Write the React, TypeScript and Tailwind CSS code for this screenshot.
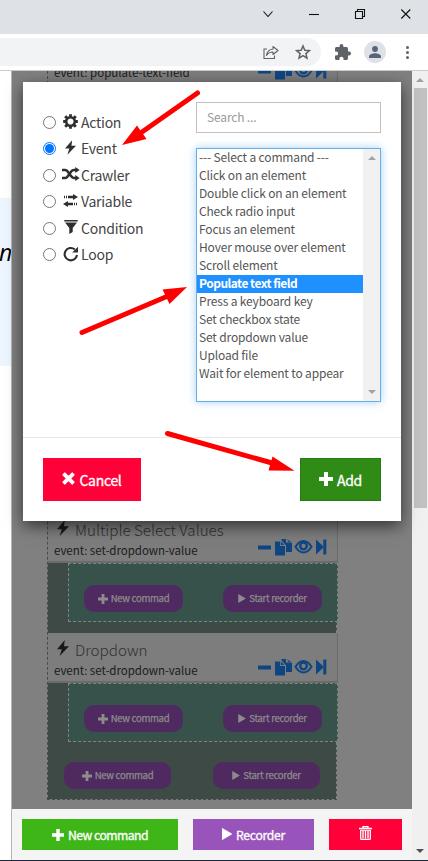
import React from "react";

const sans = "font-['Noto_Sans_CJK_SC','Noto_Sans',sans-serif]";

function Plus({ className = "" }: { className?: string }) {
  return (
    <svg viewBox="0 0 14 14" className={className} fill="currentColor">
      <path d="M5 0h4v5h5v4H9v5H5V9H0V5h5z" />
    </svg>
  );
}

function Play({ className = "" }: { className?: string }) {
  return (
    <svg viewBox="0 0 10 12" className={className} fill="currentColor">
      <path d="M0 0.3Q0-.2.6.2L9.7 5.6q.5.4 0 .8L.6 11.8Q0 12.2 0 11.7z" />
    </svg>
  );
}

function Bolt({ className = "" }: { className?: string }) {
  return (
    <svg viewBox="0 0 12 16" className={className} fill="currentColor">
      <path d="M7.800 0 0 9.200h4.800L2.600 16 12 6.200H7z" />
    </svg>
  );
}

function Gear() {
  return (
    <svg viewBox="-8 -8 16 16" className="h-[15px] w-[15px]" fill="none" stroke="currentColor">
      <circle r="4.600" strokeWidth="2.700" />
      <path
        d="M0-5V-7.800M0 5V7.800M-5 0H-7.800M5 0H7.800M-3.700-3.700-5.700-5.700M3.700-3.700 5.700-5.700M-3.700 3.700-5.700 5.700M3.700 3.700 5.700 5.700"
        strokeWidth="3"
      />
    </svg>
  );
}

function Shuffle() {
  return (
    <svg viewBox="0 0 18 14" className="h-[14px] w-[18px] shrink-0" fill="none" stroke="currentColor" strokeWidth="2.500">
      <path d="M0 2.900h3.200c1.300 0 1.800.7 2.400 1.500l3.600 4.900c.7 1 1.300 1.600 2.600 1.600H14M0 10.900h3.200c1.300 0 1.800-.7 2.400-1.500l3.600-4.900c.7-1 1.300-1.600 2.600-1.600H14" />
      <path d="M13.300 0 17.600 3l-4.300 3zM13.300 8l4.300 3-4.300 3z" fill="currentColor" stroke="none" />
    </svg>
  );
}

function Transfer() {
  return (
    <svg viewBox="0 0 15 13" className="h-[13px] w-[15px]" fill="currentColor">
      <path d="M10 0l5 3-5 3V4.200H5V1.800h5zM1 1.800h1v2.400H1zM3 1.800h1v2.400H3zM5 7l-5 3 5 3v-1.800h5V8.800H5zM11 8.800h1v2.400h-1zM13 8.800h1v2.400h-1z" />
    </svg>
  );
}

function Filter() {
  return (
    <svg viewBox="0 0 14 14" className="h-[14px] w-[14px]" fill="currentColor">
      <path d="M.3 0h13.400v1.400H.3zM1 2.400h12L8.700 8v4L5.300 14V8z" />
    </svg>
  );
}

function Repeat() {
  return (
    <svg viewBox="0 0 16 16" className="h-[16px] w-[16px]" fill="none" stroke="currentColor" strokeWidth="2.100">
      <path d="M14 9A6.200 6.200 0 1 1 11.800 3.400" />
      <path d="M15 .8v5.800H9.200z" fill="currentColor" stroke="none" />
    </svg>
  );
}

function Remove({ className = "" }: { className?: string }) {
  return (
    <svg viewBox="0 0 14 14" className={className} fill="currentColor">
      <path d="M3.400.5 7 4 10.600.5q.4-.4.8 0l2.100 2.100q.4.4 0 .8L10 7l3.500 3.600q.4.4 0 .8l-2.100 2.100q-.4.4-.8 0L7 10l-3.600 3.500q-.4.4-.8 0L.5 11.400q-.4-.4 0-.8L4 7 .5 3.400q-.4-.4 0-.8L2.600.5q.4-.4.8 0z" />
    </svg>
  );
}

function Trash() {
  return (
    <svg viewBox="0 0 13 14" className="-mt-[3px] h-[14px] w-[13px]" fill="none" stroke="white">
      <path d="M0 2.500h13M4 2V.6h5V2M1.700 4v8.500q0 1 1 1h7.600q1 0 1-1V4" strokeWidth="1.300" />
      <path d="M1 4.300h11" strokeWidth="1" />
      <path d="M4 4.500v8M6.500 4.500v8M9 4.500v8" strokeWidth="1.400" />
    </svg>
  );
}

function CardTools() {
  return (
    <svg viewBox="0 0 70 18" className="h-[18px] w-[70px] text-[#0f4682]" fill="currentColor">
      <path d="M0 7.500h13v4H0z" />
      <path d="M17 3.500h5V8h5v9.500H17zM23.500 1H28v3.500h3V14h-3V7.500l-4.500-5zM29 1.200 34 4.500h-3zM22.800 3.600 26.300 7h-3.500zM30 5h4v9h-4z" />
      <path
        d="M37.500 8.800C40 4.800 42.600 3 45.500 3S51 4.800 53.500 8.800C51 12.800 48.400 14.500 45.500 14.500S40 12.800 37.500 8.800z"
        fill="none"
        stroke="currentColor"
        strokeWidth="2"
      />
      <circle cx="45.500" cy="8" r="3.300" fill="none" stroke="currentColor" strokeWidth="2.300" />
      <path d="M58 1.500v15l8-7.500zM65.300 1.500h3v15h-3z" />
    </svg>
  );
}

function CardHeader({ title }: { title: string }) {
  return (
    <div className="flex h-[50px] w-[290px] shrink-0 justify-between border-r border-b-2 border-[#6b6b6b] bg-[#7d7d7d] pl-[6px]">
      <div>
        <div className="flex h-[32px] items-center">
          <Bolt className="-mt-[2px] mr-[6px] ml-[3px] h-[16px] w-[12px] text-[#191919]" />
          <span className="text-[15.200px] leading-[22px] font-light text-[#303030]">{title}</span>
        </div>
        <div className="-mt-[3px] text-[11.500px] leading-[16px] tracking-[-0.030px] text-[#1b1b1b]">event: set-dropdown-value</div>
      </div>
      <div className="pt-[25px] pr-[9px]">
        <CardTools />
      </div>
    </div>
  );
}

function DimButton({ kind, wide }: { kind: "new" | "rec"; wide?: boolean }) {
  return (
    <div
      className={`flex h-[27px] items-center justify-center gap-[3px] rounded-[10px] bg-[#4f2a60] text-[9.600px] text-[#8c8c8c] [-webkit-text-stroke:0.25px] ${wide ? "w-[107px]" : "w-[99px]"}`}
    >
      {kind === "new" ? <Plus className="h-[10px] w-[10px]" /> : <Play className="h-[9px] w-[8px]" />}
      <span className="-mt-[1px] leading-[14px] tracking-[-0.300px] whitespace-nowrap">
        {kind === "new" ? "New commad" : "Start recorder"}
      </span>
    </div>
  );
}

function NestedBox() {
  return (
    <div className="ml-[20px] flex h-[59px] w-[270px] shrink-0 justify-between border border-dashed border-[#7a8783] bg-[#36524a] px-[15px] pt-[21px]">
      <DimButton kind="new" />
      <DimButton kind="rec" />
    </div>
  );
}

const kinds: [string, React.ReactNode][] = [
  ["Action", <Gear />],
  ["Event", <Bolt className="h-[15px] w-[11px]" />],
  ["Crawler", <Shuffle />],
  ["Variable", <Transfer />],
  ["Condition", <Filter />],
  ["Loop", <Repeat />],
];

const commands = [
  "--- Select a command ---",
  "Click on an element",
  "Double click on an element",
  "Check radio input",
  "Focus an element",
  "Hover mouse over element",
  "Scroll element",
  "Populate text field",
  "Press a keyboard key",
  "Set checkbox state",
  "Set dropdown value",
  "Upload file",
  "Wait for element to appear",
];

function Radio({ checked }: { checked: boolean }) {
  return (
    <span
      className={`flex h-[13px] w-[13px] items-center justify-center rounded-full border bg-white ${checked ? "border-[#0075ff]" : "border-[#767676]"}`}
    >
      {checked && <span className="h-[9px] w-[9px] rounded-full bg-[#0075ff]" />}
    </span>
  );
}

function Modal() {
  return (
    <div className="absolute top-[11px] left-[11px] flex h-[439px] w-[378px] flex-col bg-white shadow-[0_5px_15px_rgba(0,0,0,0.6)]">
      <div className="flex h-[356px] justify-between border-b border-[#e5e5e5] pr-[20px] pl-[20px]">
        <div className="pt-[27.400px]">
          {kinds.map(([label, icon]) => (
            <div key={label} className="flex h-[26.400px] items-center">
              <Radio checked={label === "Event"} />
              <span className="mb-[2px] ml-[6px] flex w-[17px] items-center justify-center text-[#2e2e2e]">{icon}</span>
              <span className="mb-[1px] ml-[2px] text-[14px] leading-[20px] tracking-[-0.250px] text-[#444]">{label}</span>
            </div>
          ))}
        </div>
        <div className="flex w-[185px] flex-col gap-[15px] pt-[20px]">
          <div className="flex h-[31px] items-center border border-[#c2c2c2] px-[10px] pb-[2px] text-[12px] tracking-[-0.160px] text-[#999]">
            Search ...
          </div>
          <div className="flex h-[254px] border border-[#66afe9] shadow-[0_0_8px_rgba(102,175,233,0.6)]">
            <div className="flex-1">
              {commands.map((c) => (
                <div
                  key={c}
                  className={`h-[18px] pl-[2px] text-[12px] leading-[16px] whitespace-nowrap ${c === "Populate text field" ? "bg-[#1e90ff] font-bold tracking-[-0.520px] text-white" : "tracking-[-0.160px] text-[#555]"}`}
                >
                  {c}
                </div>
              ))}
            </div>
            <div className="flex w-[17px] flex-col items-center justify-between bg-[#f1f1f1] py-[7px] text-[#a3a3a3]">
              <svg viewBox="0 0 8 4" className="h-[4px] w-[8px]" fill="currentColor"><path d="M0 4 4 0l4 4z" /></svg>
              <svg viewBox="0 0 8 4" className="h-[4px] w-[8px]" fill="currentColor"><path d="M0 0h8L4 4z" /></svg>
            </div>
          </div>
        </div>
      </div>
      <div className="flex justify-between px-[20px] pt-[20px] text-[14px] text-white [-webkit-text-stroke:0.300px]">
        <div className="flex h-[43px] w-[98px] items-center justify-center gap-[4px] bg-[#ff0039]">
          <Remove className="-mt-[3px] h-[13px] w-[13px]" />
          <span className="leading-[20px] tracking-[-0.300px]">Cancel</span>
        </div>
        <div className="flex h-[43px] w-[81px] items-center justify-center gap-[4px] border border-[#2a7a13] bg-[#308a16]">
          <Plus className="-mt-[1px] h-[14px] w-[14px]" />
          <span className="leading-[20px] tracking-[-0.300px]">Add</span>
        </div>
      </div>
    </div>
  );
}

function BrowserChrome() {
  return (
    <div className="h-[71px] shrink-0 border-b border-[#c9cccf] bg-white">
      <div className="flex h-[34px] items-start bg-[#dee1e6] pl-[260px]">
        <svg viewBox="0 0 168 28" className="h-[28px] w-[168px]" fill="none" stroke="#111" strokeWidth="1.100">
          <path d="M3.500 11.500 8 16.500l4.500-5" />
          <path d="M49 14.500h10" />
          <path d="M95.500 11.500h7v7h-7zM97.500 11.500v-2h7v7h-2" />
          <path d="M141.300 9.500l9 9M150.300 9.500l-9 9" />
        </svg>
      </div>
      <div className="flex h-[36px] items-center">
        <div className="flex h-[28px] w-[321px] items-center justify-end gap-[16px] rounded-r-full bg-[#f1f3f4] pr-[10px] text-[#5f6368]">
          <svg viewBox="0 0 16 16" className="h-[16px] w-[16px]" fill="none" stroke="currentColor" strokeWidth="1.100">
            <path d="M4 5H1v9.500h10.500v-3" />
            <path d="M10 2.500 15 6.500l-5 4V8C7 8 5 9 3.500 11.500 4 8 6 5.400 10 5z" strokeLinejoin="round" />
          </svg>
          <svg viewBox="0 0 16 16" className="h-[16px] w-[16px]" fill="none" stroke="currentColor" strokeWidth="1.500">
            <path d="M8 2l1.800 4.200 4.600.4-3.500 3 1.100 4.500L8 11.700l-4 2.400 1.100-4.500-3.500-3 4.600-.4z" />
          </svg>
        </div>
        <svg viewBox="2 1 21 21" className="ml-[14px] h-[16px] w-[16px]" fill="#5f6368">
          <path d="M20.500 11H19V7c0-1.100-.9-2-2-2h-4V3.500a2.500 2.500 0 0 0-5 0V5H4c-1.100 0-2 .9-2 2v3.800h1.500a2.700 2.700 0 0 1 0 5.400H2V20c0 1.100.9 2 2 2h3.800v-1.500a2.700 2.700 0 0 1 5.400 0V22H17c1.100 0 2-.9 2-2v-4h1.500a2.500 2.500 0 0 0 0-5z" />
        </svg>
        <div className="ml-[13px] flex h-[22px] w-[22px] items-center justify-center rounded-full bg-[#dee1e6]">
          <svg viewBox="0 0 12 12" className="h-[12px] w-[12px]" fill="#59647a">
            <circle cx="6" cy="3" r="2.900" />
            <path d="M0 12V10.500C0 8.300 4 7.300 6 7.300s6 1 6 3.200V12z" />
          </svg>
        </div>
        <div className="ml-[20px] flex flex-col gap-[2px]">
          <span className="h-[3px] w-[3px] rounded-full bg-[#5f6368]" />
          <span className="h-[3px] w-[3px] rounded-full bg-[#5f6368]" />
          <span className="h-[3px] w-[3px] rounded-full bg-[#5f6368]" />
        </div>
      </div>
    </div>
  );
}

export default function App() {
  return (
    <div className={`relative flex h-[861px] w-[428px] flex-col overflow-hidden bg-white ${sans}`}>
      <BrowserChrome />
      <div className="flex h-[789px] shrink-0">
        <div className="w-[12px] overflow-hidden border-r border-[#b5b5b5] bg-white pt-[127px]">
          <div className="h-[168px] bg-[#edf6ff] pt-[38px] font-['Open_Sans',sans-serif] text-[23px] leading-[32px] text-black italic">
            <span className="-ml-[1px]">n</span>
          </div>
        </div>
        <div className="relative w-[400px]">
          <div className="flex h-[738px] flex-col overflow-hidden bg-[#808080] pl-[35px]">
            <div className="flex h-[729px] w-[290px] flex-col border-b border-l border-dashed border-[#4a4a4a]">
              <div className="flex h-[442px] w-[290px] shrink-0 justify-between border-r border-[#6b6b6b] bg-[#7d7d7d] pl-[6px]">
                <div className="-mt-[7px] text-[11.500px] leading-[16px] text-[#1b1b1b]">event: populate-text-field</div>
                <div className="-mt-[9px] pr-[9px]"><CardTools /></div>
              </div>
              <CardHeader title="Multiple Select Values" />
              <div className="flex h-[70px] w-[289px] flex-col border-r border-dashed border-[#7a8783] bg-[#3e4a46]"><NestedBox /></div>
              <CardHeader title="Dropdown" />
              <div className="flex w-[289px] flex-1 flex-col border-r border-dashed border-[#7a8783] bg-[#3e4a46]">
                <NestedBox />
                <div className="mt-[20px] flex w-[272px] justify-between pl-[16px]">
                  <DimButton kind="new" wide />
                  <DimButton kind="rec" wide />
                </div>
              </div>
            </div>
          </div>
          <div className="flex h-[51px] items-center gap-[15px] bg-[#f4f4f4] px-[10px] text-[12.200px] tracking-[-0.550px] text-white [-webkit-text-stroke:0.300px]">
            <div className="flex h-[31px] w-[156px] items-center justify-center gap-[4px] bg-[#3fb618]">
              <Plus className="h-[12px] w-[12px]" />
              <span className="leading-[18px]">New command</span>
            </div>
            <div className="flex h-[31px] w-[121px] items-center justify-center gap-[4px] bg-[#9954bb]">
              <Play className="-mt-[1px] h-[12px] w-[10px]" />
              <span className="leading-[18px] tracking-[-0.300px]">Recorder</span>
            </div>
            <div className="flex h-[31px] w-[73px] items-center justify-center bg-[#ff0039]"><Trash /></div>
          </div>
          <Modal />
        </div>
        <div className="flex w-[16px] flex-col items-center bg-[#f0f0f0] pt-[7px]">
          <svg viewBox="0 0 8 4" className="h-[4px] w-[8px]" fill="#a0a0a0"><path d="M0 4 4 0l4 4z" /></svg>
          <div className="mt-[6px] ml-[1px] h-[420px] w-[13px] bg-[#c1c1c1]" />
          <svg viewBox="0 0 8 4" className="mt-[341px] h-[4px] w-[8px]" fill="#505050"><path d="M0 0h8L4 4z" /></svg>
        </div>
      </div>
      <div className="h-px bg-[#1c2638]" />
      <svg viewBox="0 0 428 861" className="pointer-events-none absolute inset-0 h-[861px] w-[428px]" fill="red" stroke="red">
        <g strokeWidth="5" strokeLinecap="round">
          <path d="M197.500 93 142 132M82 332.500 168 296M167.500 433.500 272 463" />
        </g>
        <g stroke="none">
          <path d="M122 145 137 125.500 146.500 139zM187 287 162.500 289.500 169.500 304zM294.500 470.700 272.500 456.500 268.500 470.500z" />
        </g>
      </svg>
    </div>
  );
}
